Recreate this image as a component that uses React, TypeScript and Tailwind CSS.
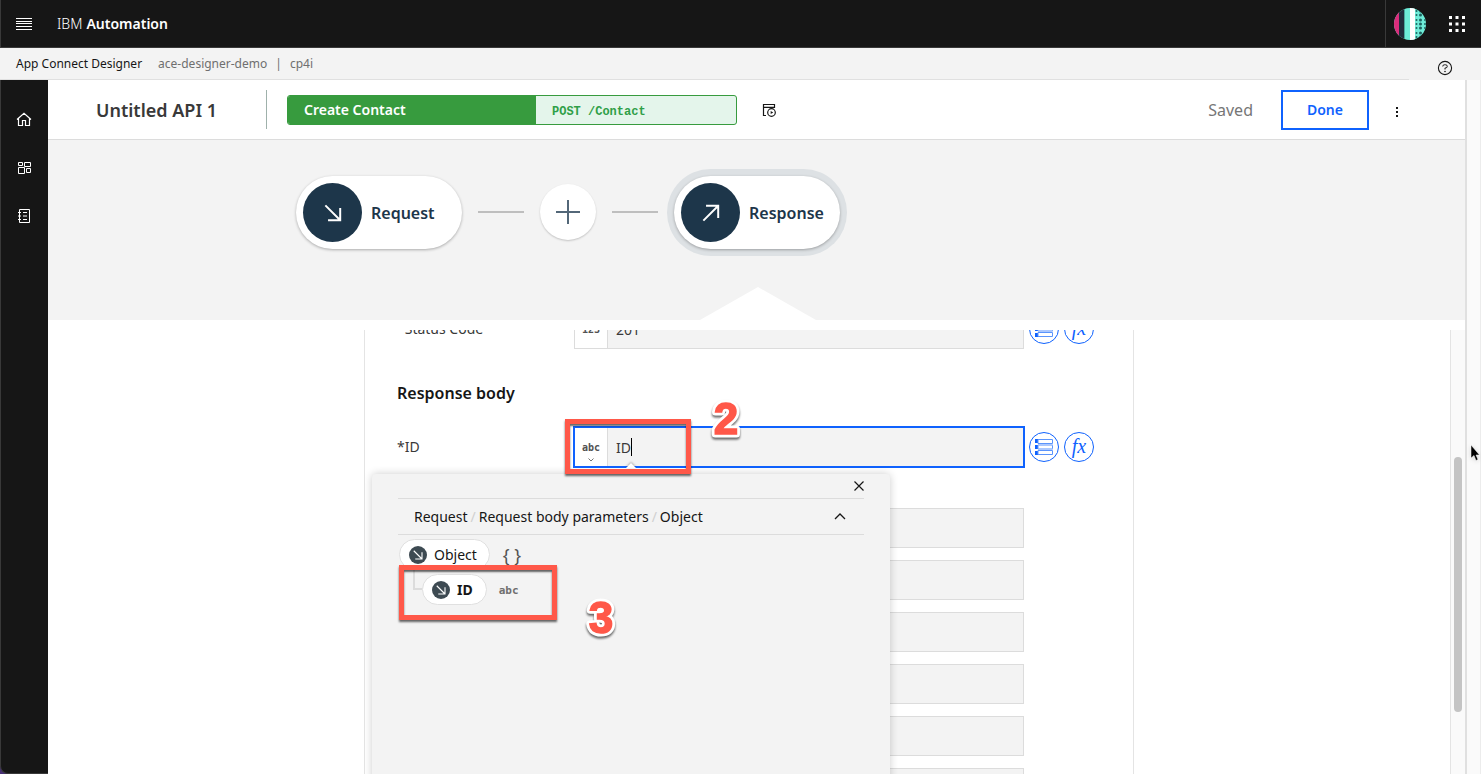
import { ReactNode } from "react";

function ArrowCircle({ up = false, small = false }: { up?: boolean; small?: boolean }) {
  return (
    <span
      className={
        small
          ? "flex size-[18px] shrink-0 items-center justify-center rounded-full bg-[#3d4a52]"
          : "flex size-[59px] shrink-0 items-center justify-center rounded-full bg-[#1d364a]"
      }
    >
      <svg viewBox="0 0 20 20" fill="none" stroke="#fff" strokeWidth="2.2" className={small ? "size-[10px]" : "size-[18px]"}>
        {up ? <path d="M1.500 18.500 17.500 2.500M4.500 2H18V15.500" /> : <path d="M1.500 1.500 17.500 17.500M18 4.500V18H4.500" />}
      </svg>
    </span>
  );
}

function Header() {
  return (
    <header className="flex h-12 shrink-0 items-stretch border-b border-l border-b-[#393939] border-l-[#393939] bg-[#161616] text-white">
      <button aria-label="Menu" className="flex w-[46px] items-center justify-center">
        <svg viewBox="0 0 16 12" className="h-3 w-4" stroke="#fff" strokeWidth="1" shapeRendering="crispEdges">
          <path d="M0 .5H16M0 3.500H16M0 5.500H16M0 8.500H16M0 11.500H16" />
        </svg>
      </button>
      <a href="#home" className="ml-[10px] flex items-center gap-1 text-sm">
        <span className="font-light">IBM</span>
        <span className="font-semibold">Automation</span>
      </a>
      <div className="ml-auto flex items-center border-l border-[#393939]">
        <button aria-label="Account" className="flex w-[47px] items-center justify-center">
          <svg viewBox="0 0 32 32" className="size-8">
            <defs>
              <clipPath id="avatar"><circle cx="16" cy="16" r="16" /></clipPath>
            </defs>
            <g clipPath="url(#avatar)">
              <rect width="32" height="32" fill="#6eecd8" />
              <rect width="5" height="32" fill="#da2c7b" />
              <rect x="5" width="5" height="32" fill="#212c3c" />
              <rect x="10" width="1" height="32" fill="#4aa79c" />
              <rect x="16" width="5" height="32" fill="#fff" />
              <g fill="#1d6360">
                {[3, 7, 12, 16, 20, 25, 29].map((y) => (
                  <g key={y}>
                    <circle cx="22.500" cy={y} r="1" />
                    <circle cx="26.500" cy={y} r="1.500" />
                    <circle cx="31" cy={y} r="1" />
                  </g>
                ))}
              </g>
            </g>
          </svg>
        </button>
        <button aria-label="App switcher" className="flex size-12 items-center justify-center">
          <svg viewBox="0 0 16 16" className="size-4" fill="#fff">
            {[0, 6.5, 13].map((y) => [0, 6.5, 13].map((x) => <rect key={`${x}-${y}`} x={x} y={y} width="3" height="3" />))}
          </svg>
        </button>
      </div>
    </header>
  );
}

function SubHeader() {
  return (
    <div className="relative flex h-8 shrink-0 items-center bg-[#f3f3f3] pl-4 text-xs">
      <a href="#designer" className="text-[#161616]">App Connect Designer</a>
      <span className="ml-4 text-[#6f6f6f]">ace-designer-demo</span>
      <span className="mx-2 text-[#6f6f6f]">|</span>
      <span className="text-[#6f6f6f]">cp4i</span>
      <div className="absolute right-18 bottom-0 left-0 h-px bg-[#e0e0e0]" />
      <button aria-label="Help" className="mr-7 ml-auto pt-2">
        <svg viewBox="0 0 16 16" className="size-4" fill="none" stroke="#161616">
          <circle cx="8" cy="8" r="6.600" strokeWidth="1.100" />
          <path d="M5.800 6.500V6.200A1.500 1.500 0 0 1 7.300 4.800H8.700A1.500 1.500 0 0 1 8.700 7.900H8V9.500" />
          <circle cx="8" cy="11.500" r=".8" fill="#161616" stroke="none" />
        </svg>
      </button>
    </div>
  );
}

function Sidebar() {
  return (
    <nav className="flex w-12 shrink-0 flex-col items-center gap-8 rounded-bl-lg border-b border-l border-[#393939] bg-[#161616] pt-8 pr-px">
      <a href="#home" aria-label="Home">
        <svg viewBox="0 0 16 16" className="size-4" fill="none" stroke="#fff" strokeWidth="1.200">
          <path d="M1 7.500 8 1.300 15 7.500M2.500 6.500V13.500H6.500V8.500H9.500V13.500H13.500V6.500" />
        </svg>
      </a>
      <a href="#dashboard" aria-label="Dashboard">
        <svg viewBox="0 0 16 16" className="size-4" fill="none" stroke="#fff">
          <path d="M2.500 2.500H6.500V5.500H2.500ZM8.500 2.500H14.500V6.500H8.500ZM2.500 7.500H8.500V13.500H2.500ZM10.500 8.500H14.500V12.500H10.500Z" />
        </svg>
      </a>
      <a href="#catalog" aria-label="Catalog">
        <svg viewBox="0 0 16 16" className="size-4" fill="none" stroke="#fff">
          <path d="M3.500 1.500H13.500V14.500H3.500ZM2 4.500H5M2 8H5M2 11.500H5M7 4.500H11M7 8H11M7 11.500H11" />
        </svg>
      </a>
    </nav>
  );
}

function Toolbar() {
  return (
    <div className="flex h-[60px] shrink-0 items-center border-b border-[#dcdcdc] bg-white pl-12">
      <h1 className="w-[170px] text-lg font-semibold text-[#393939]">Untitled API 1</h1>
      <div className="h-[39px] w-px bg-[#9fb1ab]" />
      <div className="ml-5 flex h-[30px] w-[450px] overflow-hidden rounded-[3px] border border-[#379b3e] bg-[#e4f5eb]">
        <button className="w-[248px] bg-[#379b3e] pl-4 text-left text-sm font-semibold text-white">Create Contact</button>
        <span className="flex items-center pt-1 pl-4 font-['Liberation_Mono',monospace] text-xs leading-none font-bold text-[#2f9f48]">
          POST /Contact
        </span>
      </div>
      <button aria-label="Test" className="ml-6">
        <svg viewBox="0 0 16 16" className="size-4" fill="none" stroke="#161616" strokeWidth="1.200">
          <path d="M5 13.500H2.500V2.500H13.500V6M2.500 5.300H13.500" />
          <circle cx="10.500" cy="10.500" r="3.800" />
          <path d="M9.700 9 12.200 10.500 9.700 12Z" fill="#161616" stroke="none" />
        </svg>
      </button>
      <span className="ml-auto text-base text-[#767676]">Saved</span>
      <button className="ml-7 h-10 w-[88px] border-2 border-[#0f62fe] text-sm font-semibold text-[#0f62fe]">Done</button>
      <button aria-label="More options" className="mr-15 ml-5 flex h-10 w-4 items-center justify-center pt-1">
        <svg viewBox="0 0 2 10" className="h-[10px] w-[2px]" fill="#161616">
          <path d="M0 0H2V2H0ZM0 4H2V6H0ZM0 8H2V10H0Z" />
        </svg>
      </button>
    </div>
  );
}

function Flow() {
  const pill =
    "flex h-[73px] w-[166px] items-center gap-[9px] rounded-full bg-white pl-[7px] text-base font-semibold text-[#1d364a] shadow-[0_1px_3px_rgba(0,0,0,0.3)]";
  return (
    <section className="relative h-[180px] shrink-0 bg-[#f3f3f3] pt-[29px] pl-[241px]">
      <div className="flex items-center gap-4">
        <div className="p-[7px]">
          <button className={pill}>
            <ArrowCircle />
            Request
          </button>
        </div>
        <div className="-ml-[7px] flex items-center gap-4 pb-[2px]">
          <div className="h-[2px] w-[46px] bg-[#bebebe]" />
          <button
            aria-label="Add node"
            className="flex size-14 items-center justify-center rounded-full bg-white shadow-[0_1px_2px_rgba(0,0,0,0.2)]"
          >
            <svg viewBox="0 0 24 24" className="size-6" stroke="#536778" strokeWidth="2">
              <path d="M12 0V24M0 12H24" />
            </svg>
          </button>
          <div className="h-[2px] w-[46px] bg-[#bebebe]" />
        </div>
        <div className="-ml-[7px] rounded-full bg-[#dde1e4] p-[7px]">
          <button className={pill}>
            <ArrowCircle up />
            Response
          </button>
        </div>
      </div>
      <svg viewBox="0 0 116 33" className="absolute bottom-0 left-[652px] h-[33px] w-[116px]" fill="#fff">
        <path d="M0 33 58 0 116 33Z" />
      </svg>
    </section>
  );
}

function FieldActions() {
  return (
    <div className="ml-[5px] flex gap-[5px]">
      <button aria-label="Insert reference" className="flex size-[30px] items-center justify-center rounded-full border border-[#0f62fe]">
        <svg viewBox="0 0 18 16" className="h-4 w-[18px]">
          <path d="M0 0H3V4H0ZM0 6H3V10H0ZM0 12H3V16H0Z" fill="#0f62fe" />
          <path d="M3 .5H17.500V4.500H3ZM3 6H17.500V10H3ZM3 11.500H17.500V15.500H3Z" fill="#fff" stroke="#5b94fc" />
          <path d="M3 6H18M3 10H18" stroke="#a9c6fe" />
        </svg>
      </button>
      <button
        aria-label="Edit expression"
        className="flex size-[30px] items-center justify-center rounded-full border border-[#0f62fe] pb-[2px] font-['Liberation_Serif',serif] text-xl leading-none text-[#0f62fe] italic"
      >
        fx
      </button>
    </div>
  );
}

function Field({ id, label, type, value, active = false }: { id: string; label: string; type: string; value: string; active?: boolean }) {
  return (
    <div className="flex h-10 items-center pl-8">
      <label htmlFor={id} className="w-[177px] shrink-0 text-sm text-[#393939]">{label}</label>
      <div
        className={
          active
            ? "relative -mx-px flex h-[42px] w-[452px] border-2 border-[#0f62fe] bg-[#f3f3f3]"
            : "relative flex h-10 w-[450px] border border-[#dcdcdc] bg-[#f3f3f3]"
        }
      >
        <button
          aria-label={`${label} type`}
          className="relative w-[33px] shrink-0 border-r border-[#dcdcdc] bg-white font-['DejaVu_Sans_Mono',monospace] text-[10px] font-bold text-[#525252]"
        >
          {type}
          {active && (
            <svg viewBox="0 0 6 4" className="absolute bottom-1 left-[13px] h-1 w-[6px]" fill="none" stroke="#525252" strokeWidth=".8">
              <path d="M.5.5 3 3 5.500.5" />
            </svg>
          )}
        </button>
        <input id={id} defaultValue={value} className="min-w-0 flex-1 bg-transparent pt-px pl-2 text-sm text-[#393939] outline-none" />
        {active && <span className="absolute top-[10px] left-14 h-[18px] w-px bg-black" />}
      </div>
      <FieldActions />
    </div>
  );
}

function Chip({ children, bold = false }: { children: ReactNode; bold?: boolean }) {
  return (
    <button
      className={
        bold
          ? "flex h-[31px] items-center gap-[7px] rounded-full border border-[#e0e0e0] bg-white pr-[13px] pl-[9px] text-sm font-bold text-[#161616]"
          : "flex h-[31px] items-center gap-[7px] rounded-full border border-[#e0e0e0] bg-white pr-3 pl-[9px] text-sm text-[#161616]"
      }
    >
      <ArrowCircle small />
      {children}
    </button>
  );
}

function MappingPopover() {
  return (
    <div className="absolute top-[165px] left-[7px] h-[400px] w-[518px] rounded-t bg-[#f3f3f3] px-[26px] shadow-[0_0_8px_rgba(0,0,0,0.2)]">
      <div className="flex h-[25px] items-center justify-end border-b border-[#dcdcdc]">
        <button aria-label="Close">
          <svg viewBox="0 0 10 10" className="size-[10px]" stroke="#161616" strokeWidth="1.200">
            <path d="M.5.5 9.500 9.500M9.500.5.5 9.500" />
          </svg>
        </button>
      </div>
      <div className="flex h-9 items-center border-b border-[#dcdcdc] pr-[18px] pl-4 text-sm text-[#161616]">
        <span>Request</span>
        <span className="mx-[3px] text-[#d0d0d0]">/</span>
        <span>Request body parameters</span>
        <span className="mx-[3px] text-[#d0d0d0]">/</span>
        <span>Object</span>
        <button aria-label="Collapse" className="ml-auto">
          <svg viewBox="0 0 12 7" className="h-[7px] w-3" fill="none" stroke="#161616" strokeWidth="1.300">
            <path d="M1 6 6 1 11 6" />
          </svg>
        </button>
      </div>
      <div className="flex items-center gap-[13px] pt-1 pl-px">
        <Chip>Object</Chip>
        <span className="text-lg leading-none text-[#525252]">{"{ }"}</span>
      </div>
      <div className="flex items-start pt-1 pl-[15px]">
        <div className="-mt-1 h-5 w-[9px] border-b-2 border-l-2 border-[#dcdcdc]" />
        <Chip bold>ID</Chip>
        <span className="ml-3 self-center pt-1 font-['DejaVu_Sans_Mono',monospace] text-[11px] font-bold text-[#6f6f6f]">abc</span>
      </div>
    </div>
  );
}

function Callout({ children, className }: { children: ReactNode; className: string }) {
  return (
    <svg viewBox="0 0 40 48" className={className}>
      <text
        x="20"
        y="38"
        textAnchor="middle"
        fill="#ff5849"
        stroke="#fff"
        strokeWidth="7"
        strokeLinejoin="round"
        paintOrder="stroke"
        className="font-['Liberation_Sans',sans-serif] text-[44px] font-bold"
      >
        {children}
      </text>
      <text
        x="20"
        y="38"
        textAnchor="middle"
        fill="#ff5849"
        stroke="#ff5849"
        strokeWidth="1.500"
        aria-hidden="true"
        className="font-['Liberation_Sans',sans-serif] text-[44px] font-bold"
      >
        {children}
      </text>
    </svg>
  );
}

function MappingForm() {
  const blankFields = ["field-1", "field-2", "field-3", "field-4", "field-5", "field-6"];
  const frame = "pointer-events-none absolute border-5 border-[#ff5849] shadow-[0_2px_2px_rgba(0,0,0,0.6),inset_0_2px_2px_rgba(0,0,0,0.6)]";
  return (
    <section className="relative mx-auto w-[770px] border-x border-[#e4e4e4]">
      <div className="-mt-[21px]">
        <Field id="status" label="*Status Code" type="123" value="201" />
      </div>
      <h2 className="mt-8 pl-8 text-base leading-6 font-semibold text-[#161616]">Response body</h2>
      <div className="mt-[22px]">
        <Field id="body-id" label="*ID" type="abc" value="ID" active />
      </div>
      <div className="mt-[41px] flex flex-col gap-3 pl-[209px]">
        {blankFields.map((id) => (
          <input key={id} id={id} aria-label={id} className="h-10 w-[450px] border border-[#dcdcdc] bg-[#f3f3f3] px-3 text-sm" />
        ))}
      </div>
      <div className="absolute top-[154px] left-[261px] size-0 border-x-5 border-b-5 border-x-transparent border-b-white drop-shadow-[0_-1px_1px_rgba(0,0,0,0.3)]" />
      <MappingPopover />
      <div className={`${frame} top-[110px] left-[200px] h-[55px] w-[126px]`} />
      <div className={`${frame} top-[256px] left-[34px] h-[55px] w-[158px]`} />
      <Callout className="absolute top-[87px] left-[341px] h-12 w-10 drop-shadow-[0_2px_1px_rgba(0,0,0,0.6)]">2</Callout>
      <Callout className="absolute top-[286px] left-[216px] h-12 w-10 drop-shadow-[0_2px_1px_rgba(0,0,0,0.6)]">3</Callout>
    </section>
  );
}

export default function App() {
  return (
    <div className="relative flex h-screen flex-col overflow-hidden bg-[#472f73] font-['Noto_Sans',sans-serif]">
      <Header />
      <SubHeader />
      <div className="flex min-h-0 flex-1">
        <Sidebar />
        <main className="flex min-w-0 flex-1 flex-col bg-white">
          <Toolbar />
          <Flow />
          <div className="mt-[10px] flex min-h-0 flex-1">
            <div className="min-w-0 flex-1 overflow-hidden">
              <MappingForm />
            </div>
            <div className="w-[15px] shrink-0 border-l border-[#e4e4e4] bg-[#fafafa] px-[3px] pt-[127px]">
              <div className="h-[255px] w-2 rounded-full bg-[#c4c4c4]" />
            </div>
          </div>
        </main>
        <div className="w-4 shrink-0 border-r border-l-2 border-r-[#ececec] border-l-[#e0e0e0] bg-[#fafafa]" />
      </div>
      <svg viewBox="0 0 10 16" className="absolute top-[445px] right-px h-4 w-[10px] drop-shadow-sm">
        <path d="M1 0V13L4 10.500 6 15.500 8 14.500 6 10H9.500Z" fill="#000" stroke="#fff" strokeWidth=".5" />
      </svg>
    </div>
  );
}
